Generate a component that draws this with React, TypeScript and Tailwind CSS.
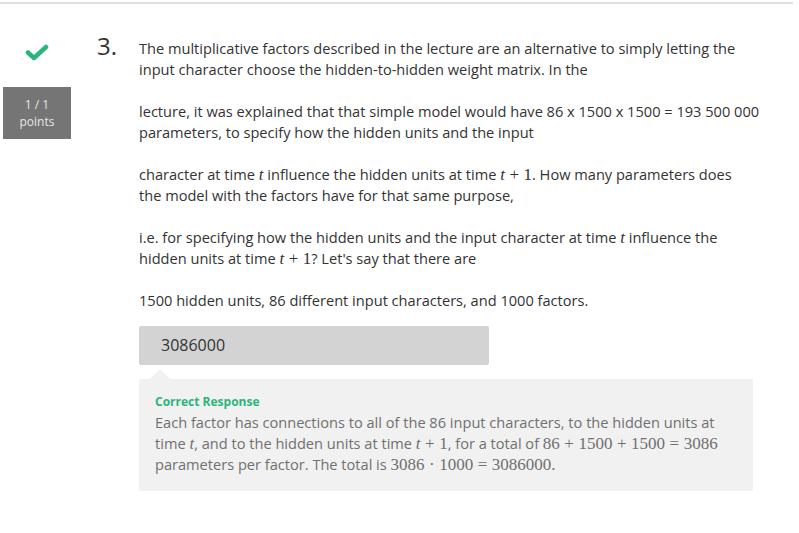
import { FunctionComponent, ReactNode } from "react";

const M: FunctionComponent<{ children: ReactNode }> = ({ children }) => (
  <span className="font-['Liberation_Serif',serif] text-[17px]">{children}</span>
);

const T = () => <i className="font-['Liberation_Serif',serif] text-[17px]">t</i>;

const Op: FunctionComponent<{ children: ReactNode }> = ({ children }) => (
  <span className="mx-[4.5px]">{children}</span>
);

const CheckIcon = () => (
  <svg width="24" height="17" viewBox="0 0 24 17" fill="none">
    <path d="M3 8.5 L9 14 L21 3" stroke="#2bb57a" strokeWidth="4.5" strokeLinecap="round" strokeLinejoin="round" />
  </svg>
);

const App: FunctionComponent = () => {
  return (
    <div className="min-h-screen bg-white font-['Open_Sans',sans-serif] text-[14.6px] leading-[21px] text-[#333]">
      <div className="pt-[2px]">
        <div className="h-[2px] w-[793px] bg-[#e0e0e0]" />
      </div>
      <div className="flex pl-[3px] pt-[33px]">
        <div className="flex w-[68px] flex-col items-center">
          <div className="mt-[7px]">
            <CheckIcon />
          </div>
          <div className="mt-[26px] flex h-[52px] w-[68px] flex-col items-center justify-center bg-[#757575] text-[12px] leading-[17px] text-[#e6e6e6]">
            <span>1 / 1</span>
            <span>points</span>
          </div>
        </div>
        <div className="-mt-[3px] ml-[26px] w-[42px] text-[24px] leading-[24px] text-[#333]">3.</div>
        <div className="w-[614px] pt-[1px]">
          <div className="w-[625px]">
            <p>
              The multiplicative factors described in the lecture are an alternative to simply letting the input
              character choose the hidden-to-hidden weight matrix. In the
            </p>
            <p className="mt-[21px]">
              lecture, it was explained that that simple model would have 86 x 1500 x 1500 = 193 500 000
              parameters, to specify how the hidden units and the input
            </p>
            <p className="mt-[21px]">
              character at time <T /> influence the hidden units at time{" "}
              <M>
                <i>t</i>
                <Op>+</Op>1
              </M>
              . How many parameters does
              <br />
              the model with the factors have for that same purpose,
            </p>
            <p className="mt-[21px]">
              i.e. for specifying how the hidden units and the input character at time <T /> influence the hidden
              units at time{" "}
              <M>
                <i>t</i>
                <Op>+</Op>1
              </M>
              ? Let's say that there are
            </p>
            <p className="mt-[21px]">1500 hidden units, 86 different input characters, and 1000 factors.</p>
          </div>

          <div className="mt-[15px] flex h-[39px] w-[350px] items-center rounded-[2px] bg-[#d3d3d3] pl-[22px] text-[16px] text-[#333]">
            3086000
          </div>

          <div className="relative mt-[14px] bg-[#f1f1f1] px-[16px] pt-[12px] pb-[16px] text-[#707070]">
            <div className="absolute -top-[10px] left-[11px] h-0 w-0 border-x-[10px] border-b-[10px] border-x-transparent border-b-[#f1f1f1]" />
            <div className="text-[12px] font-bold text-[#2bb57a]">Correct Response</div>
            <p>
              Each factor has connections to all of the 86 input characters, to the hidden units at time <T />,
              and to the hidden units at time{" "}
              <M>
                <i>t</i>
                <Op>+</Op>1
              </M>
              , for a total of{" "}
              <M>
                86<Op>+</Op>1500<Op>+</Op>1500<Op>=</Op>3086
              </M>{" "}
              parameters per factor. The total is{" "}
              <M>
                3086<Op>·</Op>1000<Op>=</Op>3086000.
              </M>
            </p>
          </div>
        </div>
      </div>
    </div>
  );
};

export default App;
